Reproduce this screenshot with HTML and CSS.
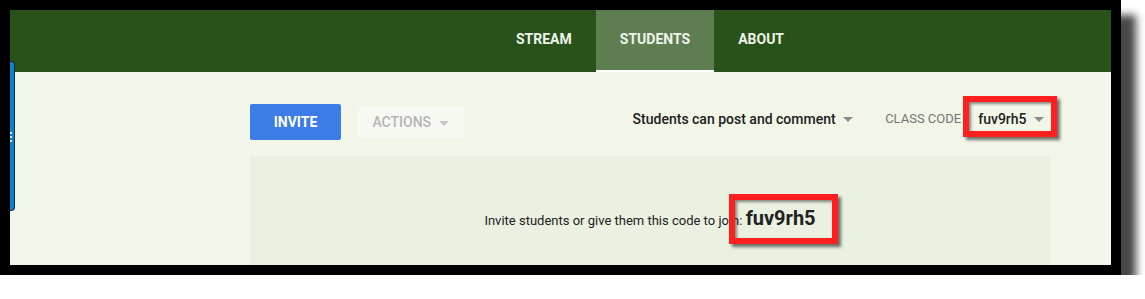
FILE: index.html
```html
<!DOCTYPE html>
<html lang="en">
<head>
    <meta charset="UTF-8">
    <title>Students</title>
    <link rel="stylesheet" href="styles.css">
</head>
<body>
<div class="frame">
    <div class="screen">
        <div class="topbar">
            <nav class="tabs">
                <a class="tab">STREAM</a>
                <a class="tab active">STUDENTS</a>
                <a class="tab">ABOUT</a>
            </nav>
        </div>
        <div class="main">
            <div class="toolbar">
                <button class="btn-invite">INVITE</button>
                <button class="btn-actions">ACTIONS <span class="caret light"></span></button>
                <div class="toolbar-right">
                    <div class="perm">Students can post and comment <span class="caret"></span></div>
                    <div class="classcode">
                        <span class="label">CLASS CODE</span>
                        <span class="code mark">fuv9rh5 <span class="caret"></span></span>
                    </div>
                </div>
            </div>
            <div class="card">
                <p class="join">Invite students or give them this code to join: <span class="bigcode mark">fuv9rh5</span></p>
            </div>
        </div>
        <!-- side panel handle peeking in from the left -->
        <div class="side-tab"><span class="grip"></span></div>
    </div>
</div>
</body>
</html>
```

FILE: styles.css
```css
body {
    margin: 0;
    background: #ffffff;
    font-family: Roboto, "Liberation Sans", Arial, sans-serif;
    color: #212121;
}
.frame {
    width: 1101px;
    height: 255px;
    border: 10px solid #000;
    box-shadow: 15px 15px 8px rgba(0, 0, 0, 0.72);
}
.screen {
    position: relative;
    height: 255px;
    overflow: hidden;
    background-color: #f1f6e9;
}
.topbar {
    height: 62px;
    background-color: #29521a;
}
.tabs {
    display: flex;
    justify-content: center;
    width: 800px;
    margin-left: 240px;
    height: 62px;
}
.tab {
    display: flex;
    align-items: center;
    padding: 0 24px;
    font-size: 14px;
    font-weight: 700;
    color: #eef3ea;
    box-sizing: border-box;
    padding-bottom: 4px;
}
.tab.active {
    background-color: #5e7e52;
    border-bottom: 2px solid #ffffff;
    padding-bottom: 2px;
}
.main {
    width: 800px;
    margin-left: 240px;
}
.toolbar {
    display: flex;
    align-items: center;
    margin-top: 32px;
    height: 36px;
}
button {
    font-family: inherit;
    border: none;
    border-radius: 2px;
    font-size: 14px;
    font-weight: 700;
    padding: 0;
}
.btn-invite {
    width: 91px;
    height: 36px;
    background-color: #3b7ce7;
    color: #ffffff;
}
.btn-actions {
    width: 107px;
    height: 32px;
    margin-left: 16px;
    background-color: #f6f9f2;
    color: #b5b5b5;
    font-weight: 500;
}
.caret {
    display: inline-block;
    width: 0;
    height: 0;
    border-left: 5px solid transparent;
    border-right: 5px solid transparent;
    border-top: 5px solid #8d8d8d;
    vertical-align: middle;
    margin-left: 4px;
}
.caret.light {
    border-top-color: #c6c6c6;
}
.toolbar-right {
    display: flex;
    align-items: center;
    margin-left: auto;
    margin-bottom: 7px;
}
.perm {
    font-size: 14px;
    font-weight: 500;
    color: #212121;
}
.classcode {
    display: flex;
    align-items: center;
    margin-left: 32px;
}
.label {
    font-size: 13px;
    color: #757575;
}
.code {
    margin-left: 17px;
    margin-right: 6px;
    font-size: 14px;
    font-weight: 500;
    line-height: 20px;
}
.code .caret {
    margin-left: 4px;
}
.mark {
    position: relative;
}
.mark::after {
    content: "";
    position: absolute;
    border: 6px solid #ff1f1f;
    box-shadow: 3px 3px 3px rgba(0, 0, 0, 0.55), inset 2px 2px 3px rgba(0, 0, 0, 0.45);
}
.code::after {
    left: -15px;
    right: -13px;
    top: -13px;
    bottom: -8px;
}
.card {
    margin-top: 16px;
    height: 140px;
    background-color: #eaf1e1;
    text-align: center;
}
.join {
    margin: 0;
    padding-top: 50px;
    font-size: 13px;
    line-height: 24px;
    color: #212121;
}
.bigcode {
    font-size: 20px;
    font-weight: 700;
}
.bigcode::after {
    left: -17px;
    right: -22px;
    top: -12px;
    bottom: -14px;
}
.side-tab {
    position: absolute;
    left: 0;
    top: 51px;
    width: 4px;
    height: 148px;
    background-color: #0a83d2;
    border: 1px solid #1c2a35;
    border-left: none;
    border-radius: 0 4px 4px 0;
}
.grip {
    position: absolute;
    left: 0;
    top: 70px;
    width: 2px;
    height: 10px;
    background: repeating-linear-gradient(#d6e8f5 0 2px, transparent 2px 4px);
}
```
